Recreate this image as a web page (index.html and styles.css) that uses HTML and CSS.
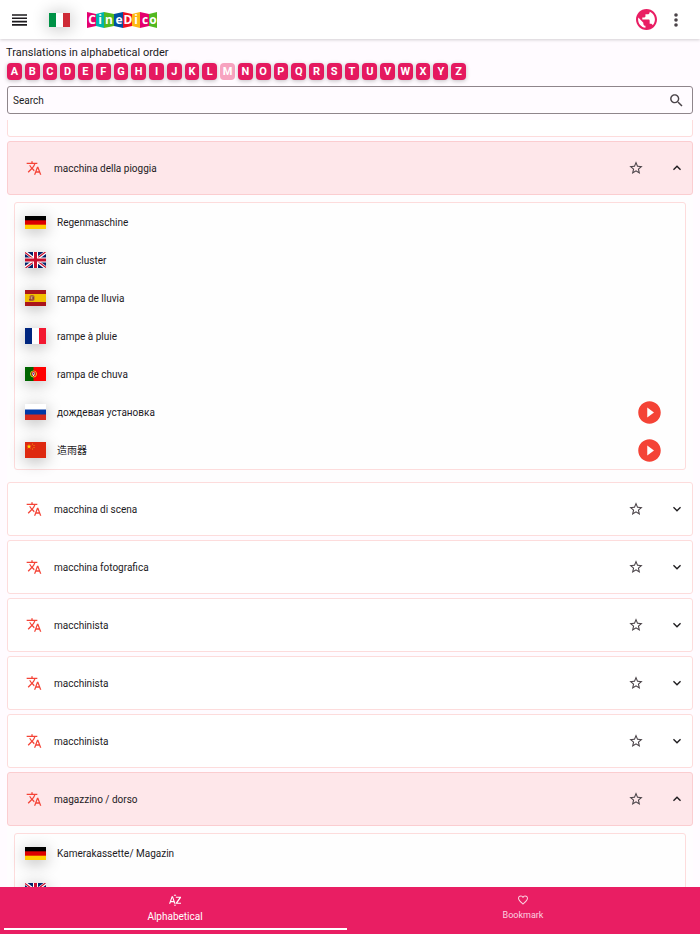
FILE: index.html
```
<!DOCTYPE html>
<html lang="en">
<head>
<meta charset="utf-8">
<meta name="viewport" content="width=device-width, initial-scale=1">
<title>CineDico</title>
<link rel="stylesheet" href="styles.css">
</head>
<body>
<svg class="defs" aria-hidden="true">
  <symbol id="translate" viewBox="0 0 24 24"><path d="M12.87 15.07l-2.54-2.51.03-.03c1.74-1.94 2.98-4.17 3.71-6.53H17V4h-7V2H8v2H1v1.99h11.17C11.5 7.92 10.44 9.75 9 11.35 8.07 10.32 7.3 9.19 6.69 8h-2c.73 1.63 1.73 3.17 2.98 4.56l-5.09 5.02L4 19l5-5 3.11 3.11.76-2.04zM18.5 10h-2L12 22h2l1.12-3h4.75L21 22h2l-4.5-12zm-2.62 7l1.62-4.33L19.12 17h-3.24z"/></symbol>
  <symbol id="star" viewBox="0 0 24 24"><path d="M22 9.24l-7.19-.62L12 2 9.19 8.63 2 9.24l5.46 4.73L5.82 21 12 17.27 18.18 21l-1.63-7.03L22 9.24zM12 15.4l-3.76 2.27 1-4.28-3.32-2.88 4.38-.38L12 6.1l1.71 4.04 4.38.38-3.32 2.88 1 4.28L12 15.4z"/></symbol>
  <symbol id="up" viewBox="0 0 24 24"><path d="M12 8l-6 6 1.41 1.41L12 10.83l4.59 4.58L18 14z"/></symbol>
  <symbol id="down" viewBox="0 0 24 24"><path d="M16.59 8.59L12 13.17 7.41 8.59 6 10l6 6 6-6z"/></symbol>
  <symbol id="play" viewBox="0 0 24 24"><path d="M12 2C6.48 2 2 6.48 2 12s4.48 10 10 10 10-4.48 10-10S17.52 2 12 2zm-2 14.5v-9l6 4.5-6 4.5z"/></symbol>
  <symbol id="de" viewBox="0 0 21 13"><path d="M0 0h21v13H0z"/><path fill="#d00" d="M0 4.3h21V13H0z"/><path fill="#ffce00" d="M0 8.7h21V13H0z"/></symbol>
  <symbol id="gb" viewBox="0 0 42 32"><path fill="#012169" d="M0 0h42v32H0z"/><path stroke="#fff" stroke-width="6" d="M0 0l42 32M42 0L0 32"/><path stroke="#c8102e" stroke-width="2.4" d="M0 1l20 15M42 31L22 16M41 0L21 15M1 32l20-15"/><path stroke="#fff" stroke-width="10" d="M21 0v32M0 16h42"/><path stroke="#c8102e" stroke-width="6" d="M21 0v32M0 16h42"/></symbol>
</svg>

<header class="topbar">
  <button class="icon-btn menu" aria-label="Menu"><svg viewBox="0 0 15 12"><path stroke="#1d1b1e" stroke-width="1.6" d="M0 1h15M0 4.300h15M0 7.600h15M0 10.900h15"/></svg></button>
  <button class="icon-btn lang" aria-label="Italiano"><svg class="flag" viewBox="0 0 21 14"><path fill="#fff" d="M0 0h21v14H0z"/><path fill="#009246" d="M0 0h7v14H0z"/><path fill="#ce2b37" d="M14 0h7v14h-7z"/></svg></button>
  <svg class="logo" viewBox="0 0 72 18" role="img" aria-label="CineDico">
    <path fill="#e5006d" d="M1 1l9 2v12l-9 2z"/><path fill="#00b5ad" d="M10 3l8-2v16l-8-2z"/><path fill="#52b81f" d="M18 1l10 2v12l-10 2z"/><path fill="#0050a0" d="M28 3l9-2v16l-9-2z"/><path fill="#ed1021" d="M37 1l9 2v12l-9 2z"/><path fill="#fdb913" d="M46 3l8-2v16l-8-2z"/><path fill="#e5006d" d="M54 1l9 2v12l-9 2z"/><path fill="#52b81f" d="M63 3l8-2v16l-8-2z"/>
    <g fill="#fff" font-family="Open Sans, sans-serif" font-size="12" font-weight="700" text-anchor="middle"><text x="6" y="13">C</text><text x="14" y="13">i</text><text x="23" y="13">n</text><text x="33" y="13">e</text><text x="42" y="13">D</text><text x="50" y="13">i</text><text x="59" y="13">c</text><text x="67" y="13">o</text></g>
  </svg>
  <button class="icon-btn globe" aria-label="Language"><svg viewBox="2 2 20 20"><path d="M12 2C6.48 2 2 6.48 2 12s4.480 10 10 10 10-4.480 10-10S17.520 2 12 2zm-1 17.930c-3.950-.490-7-3.850-7-7.930 0-.620.080-1.210.210-1.790L9 15v1c0 1.100.900 2 2 2v1.930zm6.900-2.540c-.260-.810-1-1.390-1.900-1.390h-1v-3c0-.550-.450-1-1-1H8v-2h2c.550 0 1-.450 1-1V7h2c1.100 0 2-.900 2-2v-.410c2.930 1.190 5 4.060 5 7.410 0 2.080-.800 3.970-2.100 5.390z"/></svg></button>
  <button class="icon-btn more" aria-label="More"><svg viewBox="0 0 4 14"><circle cx="2" cy="2" r="1.8"/><circle cx="2" cy="7" r="1.8"/><circle cx="2" cy="12" r="1.8"/></svg></button>
</header>

<section class="tools">
  <h1>Translations in alphabetical order</h1>
  <div class="letters">
    <button>A</button><button>B</button><button>C</button><button>D</button><button>E</button><button>F</button><button>G</button><button>H</button><button>I</button><button>J</button><button>K</button><button>L</button><button class="current">M</button><button>N</button><button>O</button><button>P</button><button>Q</button><button>R</button><button>S</button><button>T</button><button>U</button><button>V</button><button>W</button><button>X</button><button>Y</button><button>Z</button>
  </div>
  <div class="search">
    <input type="search" placeholder="Search" aria-label="Search">
    <svg viewBox="0 0 24 24"><path d="M15.500 14h-.790l-.280-.270C15.410 12.590 16 11.110 16 9.500 16 5.910 13.090 3 9.500 3S3 5.910 3 9.500 5.910 16 9.500 16c1.610 0 3.090-.590 4.230-1.570l.270.280v.790l5 4.990L20.490 19l-4.990-5zm-6 0C7.010 14 5 11.990 5 9.500S7.010 5 9.500 5 14 7.010 14 9.500 11.990 14 9.500 14z"/></svg>
  </div>
</section>

<main class="list">
  <article class="card passed"></article>

  <article class="card open">
    <svg class="tr"><use href="#translate"/></svg><h2>macchina della pioggia</h2>
    <button class="icon-btn fav" aria-label="Bookmark"><svg><use href="#star"/></svg></button>
    <button class="icon-btn toggle" aria-label="Collapse"><svg><use href="#up"/></svg></button>
  </article>
  <div class="details">
    <ul class="panel">
      <li><svg class="flag wide"><use href="#de"/></svg><span>Regenmaschine</span></li>
      <li><svg class="flag"><use href="#gb"/></svg><span>rain cluster</span></li>
      <li><svg class="flag" viewBox="0 0 42 32"><path fill="#aa151b" d="M0 0h42v32H0z"/><path fill="#f1bf00" d="M0 8h42v16H0z"/><path fill="#ad6530" d="M9 12l3-2 4 0 3 2v8l-3 2h-4l-3-2z"/><path fill="#c4a08a" d="M12 13h3v5h-3z"/><path fill="#8b3b45" d="M8 18h4v3H8zM15 14h3v5h-3z"/></svg><span>rampa de lluvia</span></li>
      <li><svg class="flag" viewBox="0 0 42 32"><path fill="#fff" d="M0 0h42v32H0z"/><path fill="#00267f" d="M0 0h14v32H0z"/><path fill="#f31830" d="M28 0h14v32H28z"/></svg><span>rampe à pluie</span></li>
      <li><svg class="flag mid" viewBox="0 0 42 28"><path fill="red" d="M0 0h42v28H0z"/><path fill="#060" d="M0 0h17v28H0z"/><circle cx="17" cy="14" r="6" fill="none" stroke="#e5dc21" stroke-width="2"/><path fill="#fff" stroke="#d42020" stroke-width="2" d="M14 10h6v6l-3 3-3-3z"/><path fill="#234a9c" d="M16 12h2v3h-2z"/></svg><span>rampa de chuva</span></li>
      <li><svg class="flag" viewBox="0 0 42 32"><path fill="#fff" d="M0 0h42v32H0z"/><path fill="#0039a6" d="M0 11h42v21H0z"/><path fill="#d52b1e" d="M0 21h42v11H0z"/></svg><span>дождевая установка</span><button class="icon-btn play" aria-label="Play"><svg><use href="#play"/></svg></button></li>
      <li><svg class="flag" viewBox="0 0 42 32"><path fill="#de2910" d="M0 0h42v32H0z"/><path fill="#ffde00" d="M8 4l1.200 3.500H13l-3 2.200 1.100 3.600L8 11.200l-3.100 2.100L6 9.700 3 7.500h3.800z"/><g fill="#ffb000"><circle cx="15" cy="4" r="1"/><circle cx="18" cy="7" r="1"/><circle cx="18" cy="11" r="1"/><circle cx="15" cy="14" r="1"/></g></svg><span lang="zh">造雨器</span><button class="icon-btn play" aria-label="Play"><svg><use href="#play"/></svg></button></li>
    </ul>
  </div>

  <article class="card">
    <svg class="tr"><use href="#translate"/></svg><h2>macchina di scena</h2>
    <button class="icon-btn fav" aria-label="Bookmark"><svg><use href="#star"/></svg></button>
    <button class="icon-btn toggle" aria-label="Expand"><svg><use href="#down"/></svg></button>
  </article>
  <article class="card">
    <svg class="tr"><use href="#translate"/></svg><h2>macchina fotografica</h2>
    <button class="icon-btn fav" aria-label="Bookmark"><svg><use href="#star"/></svg></button>
    <button class="icon-btn toggle" aria-label="Expand"><svg><use href="#down"/></svg></button>
  </article>
  <article class="card">
    <svg class="tr"><use href="#translate"/></svg><h2>macchinista</h2>
    <button class="icon-btn fav" aria-label="Bookmark"><svg><use href="#star"/></svg></button>
    <button class="icon-btn toggle" aria-label="Expand"><svg><use href="#down"/></svg></button>
  </article>
  <article class="card">
    <svg class="tr"><use href="#translate"/></svg><h2>macchinista</h2>
    <button class="icon-btn fav" aria-label="Bookmark"><svg><use href="#star"/></svg></button>
    <button class="icon-btn toggle" aria-label="Expand"><svg><use href="#down"/></svg></button>
  </article>
  <article class="card">
    <svg class="tr"><use href="#translate"/></svg><h2>macchinista</h2>
    <button class="icon-btn fav" aria-label="Bookmark"><svg><use href="#star"/></svg></button>
    <button class="icon-btn toggle" aria-label="Expand"><svg><use href="#down"/></svg></button>
  </article>
  <article class="card open">
    <svg class="tr"><use href="#translate"/></svg><h2>magazzino / dorso</h2>
    <button class="icon-btn fav" aria-label="Bookmark"><svg><use href="#star"/></svg></button>
    <button class="icon-btn toggle" aria-label="Collapse"><svg><use href="#up"/></svg></button>
  </article>
  <div class="details">
    <ul class="panel">
      <li><svg class="flag wide"><use href="#de"/></svg><span>Kamerakassette/ Magazin</span></li>
      <li><svg class="flag"><use href="#gb"/></svg></li>
    </ul>
  </div>
</main>

<nav class="tabs">
  <a class="tab active" href="#alphabetical"><svg viewBox="1 1 22 22"><path d="M6 5L1 19h2.300l1-3h5.400l1 3H13L8.200 5zm-1 9l2-6 2 6zM13.500 6H23v2l-6.500 9H23v2h-9.500v-2L20 8h-6.500zM9.500 4h5L12 1.500zM9.500 20.500h5L12 23z"/></svg><span>Alphabetical</span></a>
  <a class="tab" href="#bookmark"><svg viewBox="0 0 24 24"><path d="M16.500 3c-1.740 0-3.410.810-4.500 2.090C10.910 3.810 9.240 3 7.500 3 4.420 3 2 5.420 2 8.500c0 3.780 3.400 6.860 8.550 11.540L12 21.350l1.450-1.320C18.600 15.360 22 12.280 22 8.500 22 5.420 19.580 3 16.500 3zm-4.400 15.550l-.1.100-.1-.1C7.140 14.240 4 11.390 4 8.500 4 6.500 5.500 5 7.500 5c1.540 0 3.040.990 3.570 2.360h1.870C13.460 5.990 14.960 5 16.500 5c2 0 3.500 1.500 3.500 3.500 0 2.890-3.140 5.740-7.900 10.050z"/></svg><span>Bookmark</span></a>
</nav>
</body>
</html>
```
FILE: styles.css
```
* { box-sizing: border-box; }

body {
  margin: 0;
  height: 100vh;
  display: flex;
  flex-direction: column;
  background: #fffbff;
  color: #1d1b1e;
  font-family: Roboto, "Noto Sans CJK SC", sans-serif;
  font-size: 10px;
  line-height: 15px;
}

svg { display: block; flex: none; }
.defs { position: absolute; width: 0; height: 0; }
h1, h2 { margin: 0; font-weight: 400; }
button { font: inherit; color: inherit; }

.icon-btn {
  display: block;
  padding: 0;
  border: 0;
  background: none;
  cursor: pointer;
}

.topbar {
  display: flex;
  align-items: center;
  height: 39px;
  flex: none;
  padding: 0 22px 0 12px;
  background: #fff;
  box-shadow: 0 1px 3px rgba(0, 0, 0, 0.18);
}
.menu svg { width: 15px; height: 12px; }
.lang { margin-left: 22px; }
.logo { width: 72px; height: 18px; margin-left: 16px; }
.globe { margin-left: auto; }
.globe svg { width: 21px; height: 21px; fill: #e91e63; }
.more { margin-left: 17px; }
.more svg { width: 4px; height: 14px; fill: #4a4348; }

.flag {
  width: 21px;
  height: 16px;
  box-shadow: 0 3px 16px rgba(0, 0, 0, 0.3);
}
.flag.wide { height: 13px; }
.flag.mid { height: 14px; }
.lang .flag { height: 14px; box-shadow: 0 1px 16px 2px rgba(0, 0, 0, 0.2); }

.tools {
  flex: none;
  padding: 6px 7px;
}
.tools h1 { margin-left: -1px; font-size: 11px; }

.letters {
  display: grid;
  grid-template-columns: repeat(26, 1fr);
  gap: 3px;
  max-width: 459px;
  margin-top: 3px;
}
.letters button {
  height: 17px;
  padding: 0;
  border: 0;
  border-radius: 4px;
  background: #e5195f;
  color: #fff;
  font-size: 11px;
  font-weight: 700;
  line-height: 17px;
  text-align: center;
  box-shadow: 0 1px 4px rgba(0, 0, 0, 0.25);
}
.letters .current { background: #f7a3c0; box-shadow: none; }

.search {
  display: flex;
  align-items: center;
  height: 28px;
  margin-top: 6px;
  padding: 0 7px 0 5px;
  border: 1px solid #8f858b;
  border-radius: 3px;
}
.search input {
  flex: 1;
  min-width: 0;
  padding: 0;
  border: 0;
  outline: 0;
  background: none;
  font: inherit;
}
.search input::placeholder { color: #1d1b1e; opacity: 1; }
.search svg { width: 17px; height: 17px; fill: #4a4348; }

.list {
  flex: 1;
  min-height: 0;
  overflow: hidden;
  margin: 0 7px;
}
.card {
  display: flex;
  align-items: center;
  height: 54px;
  margin-bottom: 4px;
  padding: 0 7px 0 18px;
  border: 1px solid #fddcdc;
  border-radius: 3px;
  background: #fff;
}
.card.passed { margin-top: -37px; }
.card.open {
  margin-bottom: 0;
  border-color: #fbcdd0;
  background: #fee7ea;
}
.tr { width: 16px; height: 16px; fill: #f44336; }
.card h2 { margin-left: 12px; font-size: 10px; }
.fav { margin-left: auto; }
.fav svg { width: 16px; height: 16px; fill: #4a4348; }
.toggle { margin-left: 25px; }
.toggle svg { width: 16px; height: 16px; fill: #1d1b1e; }

.details {
  padding: 7px 7px 12px;
  background: #fefdfe;
}
.panel {
  display: grid;
  grid-auto-rows: 38px;
  margin: 0;
  padding: 0 22px 0 10px;
  border: 1px solid #fddcdc;
  border-radius: 3px;
  background: #fefefe;
  list-style: none;
}
.panel li { display: flex; align-items: center; }
.panel span { margin-left: 11px; }
.play { margin-left: auto; }
.play svg { width: 27px; height: 27px; fill: #f44336; }

.tabs {
  position: relative;
  display: flex;
  flex: none;
  height: 47px;
  padding: 0 3px 0 1px;
  background: #e91e63;
}
.tab {
  position: relative;
  flex: 1;
  display: flex;
  flex-direction: column;
  align-items: center;
  padding-top: 7px;
  color: #fbd2e0;
  font-size: 9px;
  text-decoration: none;
}
.tab svg { width: 12px; height: 12px; fill: currentColor; }
.tab span { margin-top: 2px; }
.tab.active { color: #fff; font-size: 10px; }
.tab.active span { margin-top: 3px; }
.tab.active::after {
  content: "";
  position: absolute;
  left: 3px;
  right: 2px;
  bottom: 4px;
  height: 2px;
  background: #fff;
}
```
